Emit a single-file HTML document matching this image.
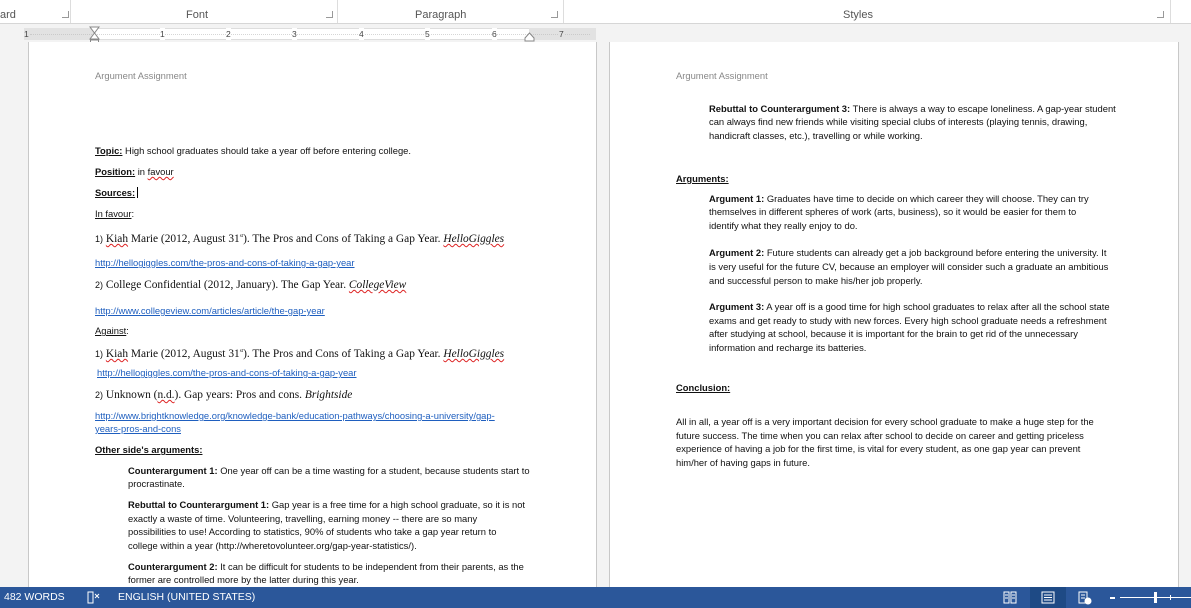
<!DOCTYPE html>
<html><head><meta charset="utf-8"><style>
*{margin:0;padding:0;box-sizing:border-box}
body{width:1191px;height:608px;overflow:hidden;background:#f3f3f3;position:relative;font-family:"Liberation Sans",sans-serif;}
.a{position:absolute;white-space:nowrap;line-height:12px;height:12px;font-size:9.4px;color:#111;letter-spacing:0;margin-top:1px}
.t{font-family:"Liberation Serif",serif;font-size:11.4px;letter-spacing:0}
.l{color:#1f5fbf;text-decoration:underline}
.u{text-decoration:underline}
.w{text-decoration:underline wavy #d22;text-decoration-thickness:1px}
.h{color:#888}
.lab{position:absolute;top:8px;font-size:11px;color:#555;line-height:14px}
.sep{position:absolute;top:0;width:1px;height:23px;background:#ddd}
.ln{position:absolute;top:11px;width:7px;height:7px;border:1px solid #999;border-top:none;border-left:none}
.rn{position:absolute;top:28px;font-size:8.5px;color:#444;line-height:12px}
</style></head><body>
<div style="position:absolute;left:0;top:0;width:1191px;height:24px;background:#fff;border-bottom:1px solid #d6d6d6"></div>
<div class="lab" style="left:0">ard</div>
<div class="ln" style="left:62px"></div><div class="sep" style="left:70px"></div>
<div class="lab" style="left:186px">Font</div>
<div class="ln" style="left:326px"></div><div class="sep" style="left:337px"></div>
<div class="lab" style="left:415px">Paragraph</div>
<div class="ln" style="left:551px"></div><div class="sep" style="left:563px"></div>
<div class="lab" style="left:843px">Styles</div>
<div class="ln" style="left:1157px"></div><div class="sep" style="left:1170px"></div>

<div style="position:absolute;left:24px;top:28px;width:572px;height:12px;background:#e2e2e2"></div>
<div style="position:absolute;left:95px;top:28px;width:434px;height:12px;background:#fff;border-top:1px solid #ddd;border-bottom:1px solid #ddd"></div>
<div style="position:absolute;left:30px;top:34px;width:560px;height:1px;border-top:1px dotted #bbb;opacity:.6"></div>
<div class="rn" style="left:24px">1</div><div class="rn" style="left:160px;background:#fff">1</div><div class="rn" style="left:226px;background:#fff">2</div><div class="rn" style="left:292px;background:#fff">3</div><div class="rn" style="left:359px;background:#fff">4</div><div class="rn" style="left:425px;background:#fff">5</div><div class="rn" style="left:492px;background:#fff">6</div><div class="rn" style="left:559px;background:#e2e2e2">7</div>
<svg style="position:absolute;left:89px;top:26px" width="12" height="22"><path d="M1 1h9L5.5 7zM5.5 7L1 13h9z" fill="#fff" stroke="#888"/><rect x="1.5" y="14" width="8" height="6" fill="#fff" stroke="#888"/></svg>
<svg style="position:absolute;left:524px;top:32px" width="12" height="10"><path d="M5.5 1L1 6v3h9V6z" fill="#fff" stroke="#888"/></svg>

<div style="position:absolute;left:28px;top:42px;width:569px;height:560px;background:#fff;border-left:1px solid #c8c8c8;border-right:1px solid #c8c8c8"></div>
<div style="position:absolute;left:609px;top:42px;width:570px;height:560px;background:#fff;border-left:1px solid #c8c8c8;border-right:1px solid #c8c8c8"></div>

<div class="a h" style="left:95px;top:69px">Argument Assignment</div>
<div class="a" style="left:95px;top:144px"><b class="u">Topic:</b> High school graduates should take a year off before entering college.</div>
<div class="a" style="left:95px;top:165px"><b class="u">Position:</b> in <span class="w">favour</span></div>
<div class="a" style="left:95px;top:186px"><b class="u">Sources:</b><span style="border-left:1px solid #000;margin-left:2px"></span></div>
<div class="a" style="left:95px;top:207px"><span class="u">In favour</span>:</div>
<div class="a t" style="left:95px;top:230px"><span style="font-family:'Liberation Sans';font-size:9px">1)</span> <span class="w">Kiah</span> Marie (2012, August 31<sup style="font-size:5px">st</sup>). The Pros and Cons of Taking a Gap Year. <i class="w">HelloGiggles</i></div>
<div class="a l" style="left:95px;top:256px">http://hellogiggles.com/the-pros-and-cons-of-taking-a-gap-year</div>
<div class="a t" style="left:95px;top:278px"><span style="font-family:'Liberation Sans';font-size:9px">2)</span> College Confidential (2012, January). The Gap Year. <i class="w">CollegeView</i></div>
<div class="a l" style="left:95px;top:304px">http://www.collegeview.com/articles/article/the-gap-year</div>
<div class="a" style="left:95px;top:324px"><span class="u">Against</span>:</div>
<div class="a t" style="left:95px;top:345px"><span style="font-family:'Liberation Sans';font-size:9px">1)</span> <span class="w">Kiah</span> Marie (2012, August 31<sup style="font-size:5px">st</sup>). The Pros and Cons of Taking a Gap Year. <i class="w">HelloGiggles</i></div>
<div class="a l" style="left:97px;top:366px">http://hellogiggles.com/the-pros-and-cons-of-taking-a-gap-year</div>
<div class="a t" style="left:95px;top:388px"><span style="font-family:'Liberation Sans';font-size:9px">2)</span> Unknown (<span class="w">n.d.</span>). Gap years: Pros and cons. <i>Brightside</i></div>
<div class="a l" style="left:95px;top:409px">http://www.brightknowledge.org/knowledge-bank/education-pathways/choosing-a-university/gap-</div>
<div class="a l" style="left:95px;top:422px">years-pros-and-cons</div>
<div class="a" style="left:95px;top:443px"><b class="u">Other side's arguments:</b></div>
<div class="a" style="left:128px;top:464px"><b>Counterargument 1:</b> One year off can be a time wasting for a student, because students start to</div>
<div class="a" style="left:128px;top:477px">procrastinate.</div>
<div class="a" style="left:128px;top:498px"><b>Rebuttal to Counterargument 1:</b> Gap year is a free time for a high school graduate, so it is not</div>
<div class="a" style="left:128px;top:512px">exactly a waste of time. Volunteering, travelling, earning money -- there are so many</div>
<div class="a" style="left:128px;top:525px">possibilities to use! According to statistics, 90% of students who take a gap year return to</div>
<div class="a" style="left:128px;top:539px">college within a year (http://wheretovolunteer.org/gap-year-statistics/).</div>
<div class="a" style="left:128px;top:560px"><b>Counterargument 2:</b> It can be difficult for students to be independent from their parents, as the</div>
<div class="a" style="left:128px;top:573px">former are controlled more by the latter during this year.</div>

<div class="a h" style="left:676px;top:69px">Argument Assignment</div>
<div class="a" style="left:709px;top:102px"><b>Rebuttal to Counterargument 3:</b> There is always a way to escape loneliness. A gap-year student</div>
<div class="a" style="left:709px;top:115px">can always find new friends while visiting special clubs of interests (playing tennis, drawing,</div>
<div class="a" style="left:709px;top:129px">handicraft classes, etc.), travelling or while working.</div>
<div class="a" style="left:676px;top:172px"><b class="u">Arguments:</b></div>
<div class="a" style="left:709px;top:192px"><b>Argument 1:</b> Graduates have time to decide on which career they will choose. They can try</div>
<div class="a" style="left:709px;top:205px">themselves in different spheres of work (arts, business), so it would be easier for them to</div>
<div class="a" style="left:709px;top:219px">identify what they really enjoy to do.</div>
<div class="a" style="left:709px;top:246px"><b>Argument 2:</b> Future students can already get a job background before entering the university. It</div>
<div class="a" style="left:709px;top:260px">is very useful for the future CV, because an employer will consider such a graduate an ambitious</div>
<div class="a" style="left:709px;top:274px">and successful person to make his/her job properly.</div>
<div class="a" style="left:709px;top:300px"><b>Argument 3:</b> A year off is a good time for high school graduates to relax after all the school state</div>
<div class="a" style="left:709px;top:314px">exams and get ready to study with new forces. Every high school graduate needs a refreshment</div>
<div class="a" style="left:709px;top:327px">after studying at school, because it is important for the brain to get rid of the unnecessary</div>
<div class="a" style="left:709px;top:341px">information and recharge its batteries.</div>
<div class="a" style="left:676px;top:381px"><b class="u">Conclusion:</b></div>
<div class="a" style="left:676px;top:415px">All in all, a year off is a very important decision for every school graduate to make a huge step for the</div>
<div class="a" style="left:676px;top:429px">future success. The time when you can relax after school to decide on career and getting priceless</div>
<div class="a" style="left:676px;top:442px">experience of having a job for the first time, is vital for every student, as one gap year can prevent</div>
<div class="a" style="left:676px;top:456px">him/her of having gaps in future.</div>

<div style="position:absolute;left:0;top:587px;width:1191px;height:21px;background:#2b579a;color:#fff;font-size:10.5px;line-height:21px">
<span style="position:absolute;left:4px">482 WORDS</span>
<svg style="position:absolute;left:87px;top:4px" width="14" height="13"><path d="M1 1h5v11H1zM8 3l4 4M12 3L8 7" fill="none" stroke="#fff"/></svg>
<span style="position:absolute;left:118px">ENGLISH (UNITED STATES)</span>
<svg style="position:absolute;left:1003px;top:4px" width="14" height="13"><path d="M1 1h5v11H1zM8 1h5v11H8zM2 4h3M2 7h3M9 4h3M9 7h3" fill="none" stroke="#fff"/></svg>
<div style="position:absolute;left:1030px;top:0;width:36px;height:21px;background:#1e4a85"></div>
<svg style="position:absolute;left:1041px;top:4px" width="14" height="13"><path d="M1 1h12v11H1zM3 4h8M3 6.5h8M3 9h8" fill="none" stroke="#fff"/></svg>
<svg style="position:absolute;left:1078px;top:4px" width="14" height="14"><path d="M1 1h8v11H1zM3 4h4M3 7h4" fill="none" stroke="#fff"/><circle cx="10" cy="10" r="3.5" fill="#fff"/></svg>
<div style="position:absolute;left:1110px;top:10px;width:5px;height:2px;background:#fff"></div>
<div style="position:absolute;left:1120px;top:10px;width:71px;height:1px;background:#fff"></div>
<div style="position:absolute;left:1154px;top:5px;width:3px;height:11px;background:#fff"></div>
<div style="position:absolute;left:1170px;top:8px;width:1px;height:5px;background:#fff"></div>
</div>
</body></html>
